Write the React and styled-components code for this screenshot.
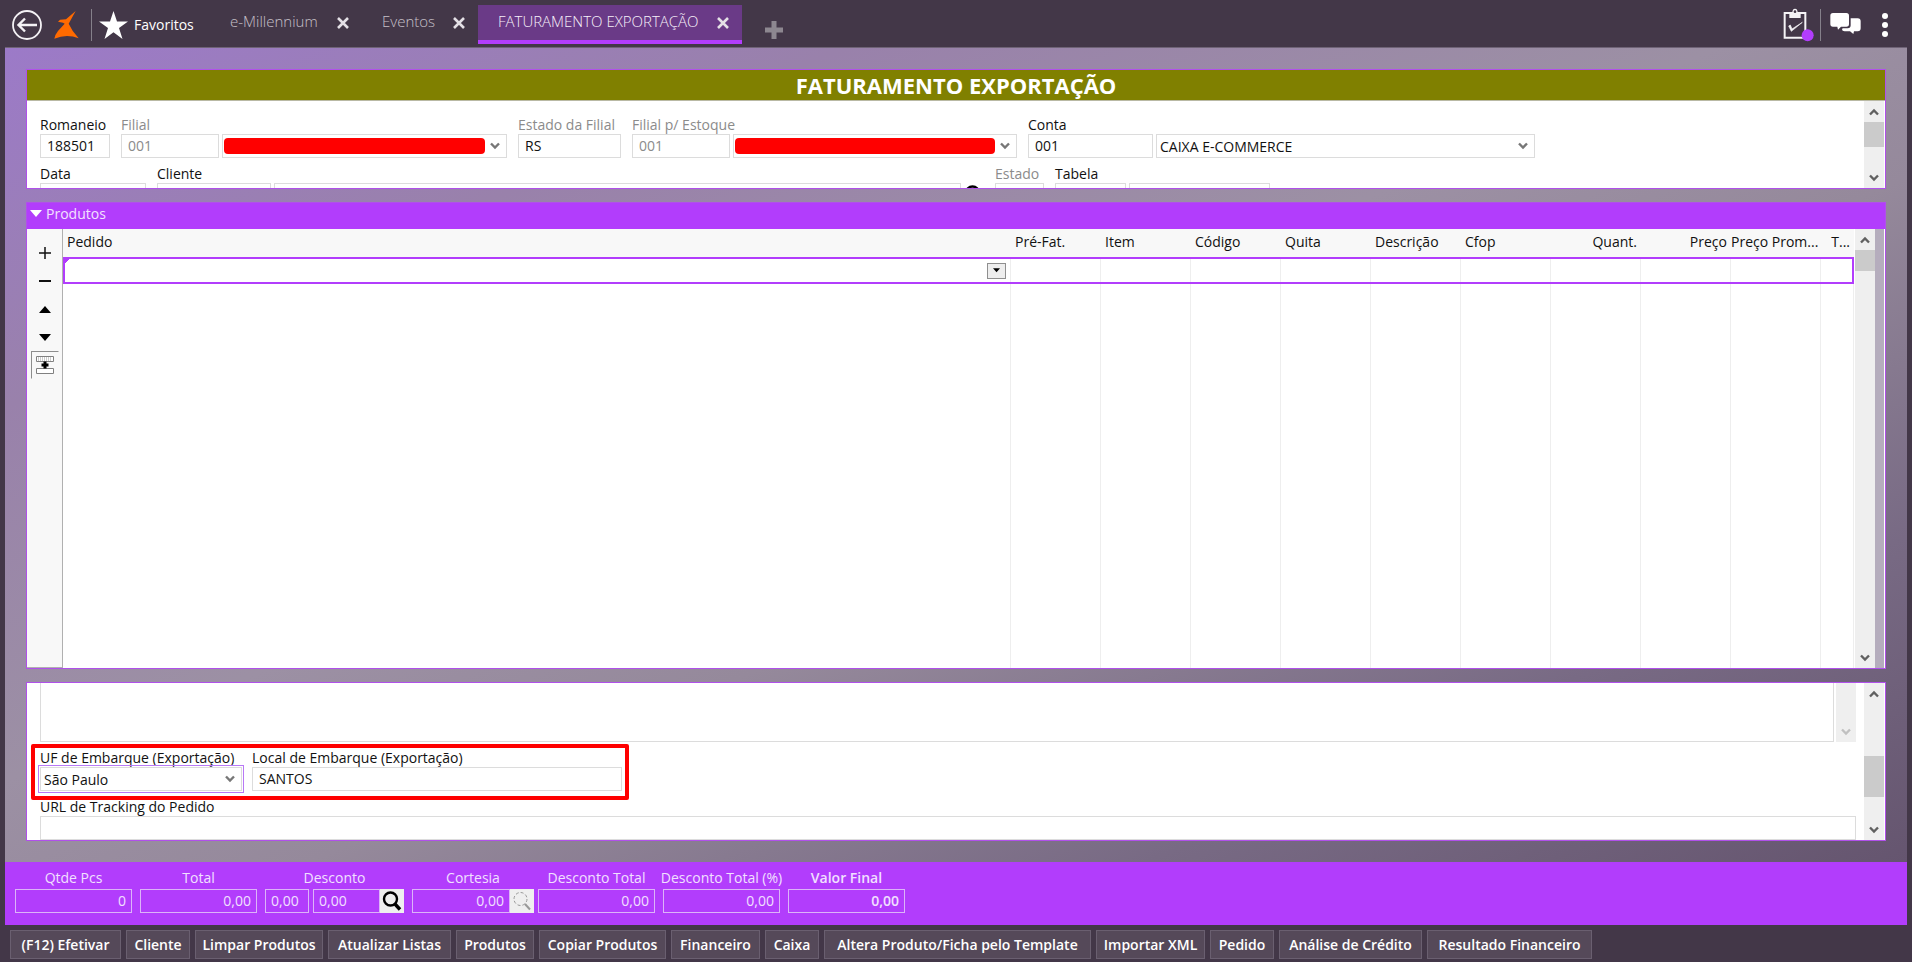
import React, { useId } from 'react'
import styled, { createGlobalStyle, css } from 'styled-components'

const GlobalStyle = createGlobalStyle`
    * {
        box-sizing: border-box;
    }

    body {
        margin: 0;
        font-family: "Open Sans", "Noto Sans", sans-serif;
        font-size: 14px;
        color: #111;
    }

    button, input, select, textarea {
        font: inherit;
        color: inherit;
        margin: 0;
        border-radius: 0;
    }

    button {
        padding: 0;
        border: none;
        background: transparent;
        cursor: pointer;
    }

    svg {
        display: block;
        flex: none;
    }
`

const Page = styled.div`
    display: flex;
    flex-direction: column;
    min-height: 100vh;
    background: #433748;
    overflow: hidden;
`

/* top bar */

const TopBar = styled.header`
    display: flex;
    height: 47px;
    padding: 0 18px 0 12px;
    color: #fff;
`

const TopGroup = styled.div`
    display: flex;
    align-items: center;
    gap: ${({ $gap }) => $gap}px;
    height: 49px;
`

const Divider = styled.span`
    width: 1px;
    height: 32px;
    background: #85808a;
`

const Favorites = styled.button`
    display: flex;
    align-items: center;
    gap: 6px;
    width: 118px;
    padding-left: 7px;
    font-weight: 500;
    white-space: nowrap;
`

const Tabs = styled.nav`
    display: flex;
    flex: 1;
    padding-top: 5px;
`

const Tab = styled.div`
    display: flex;
    align-items: center;
    justify-content: space-between;
    width: ${({ $width }) => $width}px;
    height: 39px;
    padding: 0 13px 0 20px;
    border-bottom: 4px solid transparent;
    color: #c6c0c9;
    font-size: 15px;
    font-weight: 300;
    white-space: nowrap;

    button:first-child {
        height: 30px;
        line-height: 26px;
        padding-bottom: 4px;
    }

    ${({ $active }) => $active && css`
        background: #6a3a87;
        border-bottom-color: #b23dfc;
        color: #f6f0f9;
    `}
`

const NewTab = styled.button`
    align-self: center;
    margin: 7px 0 0 23px;
`

const MenuButton = styled.button`
    padding: 0 5px 0 20px;
`

/* panels */

const Workspace = styled.main`
    display: flex;
    flex: 1;
    flex-direction: column;
    gap: 13px;
    margin: 0 5px;
    padding: 21px;
    border-top: 1px solid #6f6376;
    background: linear-gradient(to bottom right, #9c7ac8 0%, #9981ab 22%, #9c90a4 45%, #95899b 58%, #786a84 80%, #65556f 100%);
`

const Panel = styled.section`
    display: flex;
    flex-direction: column;
    flex: ${({ $height }) => ($height ? `0 0 ${$height}px` : '1 0 260px')};
    border: 1px solid #b050ea;
    background: #fff;
    overflow: hidden;
`

const Title = styled.h1`
    flex: none;
    margin: 0;
    height: 31px;
    border-bottom: 1px solid #b9b9a4;
    background: #808000;
    color: #fff;
    font-size: 22px;
    font-weight: 700;
    line-height: 30px;
    text-align: center;
`

const PanelBody = styled.div`
    display: flex;
    flex: 1;
    min-height: 0;
    padding-right: 1px;
`

const Form = styled.div`
    display: flex;
    flex: 1;
    flex-direction: column;
    gap: 7px;
    min-width: 0;
    padding: ${({ $top }) => $top}px 8px 0 13px;
    overflow: hidden;
`

const Row = styled.div`
    display: flex;
    flex: none;
    gap: 11px;
`

/* fields */

const FieldBox = styled.div`
    flex: ${({ $grow }) => ($grow ? '1 1 auto' : 'none')};

    label {
        display: block;
        height: 18px;
        line-height: 18px;
        white-space: nowrap;
        font-weight: ${({ $strong }) => ($strong ? 500 : 400)};
        color: ${({ $muted }) => ($muted ? '#8b8b8b' : '#111')};
    }
`

const Controls = styled.div`
    display: flex;
    gap: 3px;
`

const Input = styled.input`
    width: ${({ $width }) => ($width ? `${$width}px` : '100%')};
    height: 24px;
    padding: 0 6px 2px 6px;
    border: 1px solid #dcdcdc;
    background: #fff;
    color: ${({ $muted }) => ($muted ? '#8b8b8b' : '#111')};
    outline: none;
`

const SelectBox = styled.div`
    position: relative;
    width: ${({ $width }) => $width}px;
    height: 24px;
    border: 1px solid #dcdcdc;
    background: #fff;
    outline: ${({ $focused }) => ($focused ? '1px solid #b878f6' : 'none')};
    outline-offset: 1px;

    select {
        width: 100%;
        height: 22px;
        padding: 0 24px 0 3px;
        border: none;
        appearance: none;
        background: transparent;
        outline: none;
    }

    svg {
        position: absolute;
        top: 7px;
        right: 6px;
        pointer-events: none;
    }
`

const Redaction = styled.span`
    position: absolute;
    top: 3px;
    left: 1px;
    right: 21px;
    height: 16px;
    border-radius: 4px;
    background: #f00;
`

const LookupButton = styled.button`
    display: flex;
    align-items: center;
    justify-content: center;
    width: 24px;
    height: 24px;
    background: #efefef;
`

const Highlight = styled(Row)`
    position: relative;
    gap: 10px;
    align-self: flex-start;

    &::after {
        content: "";
        position: absolute;
        inset: -5px -7px -9px -9px;
        border: 4px solid #f00;
        border-radius: 2px;
        pointer-events: none;
    }
`

const NoteRow = styled.div`
    display: flex;
    flex: none;
    gap: 2px;
    height: 59px;

    textarea {
        flex: 1;
        border: 1px solid #dcdcdc;
        border-top: none;
        resize: none;
        outline: none;
    }
`

/* scroll bars */

const Track = styled.div`
    display: flex;
    flex: none;
    flex-direction: column;
    width: 20px;
    background: #efefef;

    button {
        display: flex;
        align-items: center;
        justify-content: center;
        flex: none;
        height: 21px;
    }

    button:last-child {
        margin-top: auto;
    }
`

const Thumb = styled.span`
    height: ${({ $size }) => $size}px;
    margin-top: ${({ $offset }) => $offset}px;
    background: #cbcbcb;
`

/* products */

const SectionBar = styled.button`
    display: flex;
    flex: none;
    align-items: center;
    gap: 4px;
    height: 26px;
    padding: 0 0 6px 3px;
    background: #b23dfc;
    color: #f3e2ff;
`

const ToolColumn = styled.div`
    display: flex;
    flex: none;
    flex-direction: column;
    align-items: center;
    width: 36px;
    padding-top: 10px;
    border-right: 1px solid #b0b0b0;
    border-bottom: 1px solid #b0b0b0;
    background: #f8f8f8;
`

const Tool = styled.button`
    display: flex;
    align-items: center;
    justify-content: center;
    width: 28px;
    height: 28px;
    border: 1px solid transparent;

    ${({ $pressed }) => $pressed && css`
        border-top-color: #8d8d8d;
        border-left-color: #8d8d8d;
    `}
`

const Grid = styled.div`
    flex: 1;
    min-width: 0;
    display: flex;
    padding-right: 1px;
    overflow: hidden;
`

const Table = styled.table`
    flex: 1;
    width: 100%;
    table-layout: fixed;
    border-collapse: separate;
    border-spacing: 0;

    td {
        padding: 0;
        border-right: 1px solid #eee;
    }
`

const HeadCell = styled.th`
    height: 28px;
    padding: 0 4px 4px ${({ $right }) => ($right ? 0 : 4)}px;
    background: #f8f8f8;
    font-weight: 400;
    text-align: ${({ $right }) => ($right ? 'right' : 'left')};
    white-space: nowrap;
`

const ActiveRow = styled.tr`
    height: 27px;
    outline: 2px solid #b23dfc;
    outline-offset: -2px;
`

const CellEditor = styled.div`
    display: flex;
    align-items: center;
    justify-content: flex-end;
    height: 27px;
    padding-right: 4px;
    background: linear-gradient(135deg, #b23dfc 6px, #fff 6px);

    button {
        display: flex;
        align-items: center;
        justify-content: center;
        width: 19px;
        height: 16px;
        border: 1px solid #8f8f8f;
        background: #eee;
    }
`

const Gutter = styled.span`
    width: 9px;
    background: #b5adbd;
`

/* totals and actions */

const Totals = styled.section`
    display: flex;
    gap: 8px;
    height: 63px;
    margin: 0 5px;
    padding: 7px 10px 0 10px;
    background: #b23dfc;
`

const TotalPair = styled.div`
    display: flex;
    gap: 4px;
`

const Total = styled.div`
    color: #f1e0ff;
    font-weight: ${({ $bold }) => ($bold ? 600 : 400)};

    label {
        display: flex;
        justify-content: center;
        width: 0;
        min-width: 100%;
        height: 20px;
        line-height: 18px;
        white-space: nowrap;
    }
`

const TotalInputs = styled.div`
    display: flex;
`

const TotalInput = styled.input`
    width: ${({ $width }) => $width}px;
    height: 24px;
    margin-right: ${({ $space }) => $space || 0}px;
    padding: 0 5px 2px 5px;
    border: 1px solid #dcb4f8;
    background: transparent;
    text-align: ${({ $left }) => ($left ? 'left' : 'right')};
    outline: none;
`

const Actions = styled.footer`
    display: flex;
    gap: 5px;
    height: 37px;
    padding: 5px 10px 3px 10px;
`

const Action = styled.button`
    flex: none;
    width: ${({ $width }) => $width}px;
    height: 29px;
    padding-bottom: 1px;
    border: 1px solid #6a5f70;
    background: #554959;
    color: #fff;
    font-weight: 600;
    white-space: nowrap;
`

/* icons */

const BackIcon = () => (
  <svg width="30" height="30" viewBox="0 0 30 30" fill="none" stroke="#f4f2f5">
    <circle cx="15" cy="15" r="14" strokeWidth="1.8" />
    <path d="M25 15H7M13 8.5 6.5 15l6.500 6.500" strokeWidth="2.400" />
  </svg>
)

const LogoIcon = () => (
  <svg width="25" height="28" viewBox="0 0 75 84" fill="#ff6a00">
    <path d="M65 0 44 38Q55 62 74 82Q38 68 1 83Q3 71 12 60L32 38 27 35 12 32 18 26 36 25Z" />
  </svg>
)

const StarIcon = () => (
  <svg width="29" height="28" viewBox="0 0 29 28" fill="#fff">
    <path d="M14.500 0 18 10.500h11l-9 6.500 3.500 11-9-6.800-9 6.800L9 17 0 10.500h11z" />
  </svg>
)

const CloseIcon = () => (
  <svg width="12" height="12" viewBox="0 0 12 12" stroke="#e4e0e6" strokeWidth="2.600">
    <path d="m1 1 10 10M11 1 1 11" />
  </svg>
)

const ClipboardIcon = () => (
  <svg width="31" height="34" viewBox="0 0 93 102">
    <path d="M5 15h62v74H5z" fill="none" stroke="#f5f3f6" strokeWidth="6" />
    <path d="M19 30V12h9q1-10 8-10t8 10h9v18z" fill="#f5f3f6" />
    <circle cx="36" cy="11" r="4" fill="#433748" />
    <path d="m17 54 8 16 33-27-31 20-5-12z" fill="#f5f3f6" stroke="#f5f3f6" strokeWidth="2" />
    <circle cx="74" cy="82" r="18" fill="#b23dfc" />
  </svg>
)

const ChatIcon = () => (
  <svg width="34" height="23" viewBox="-9 0 102 69" fill="#fff">
    <path d="M9 0h40q8 0 8 8v25q0 8-8 8H33l-9 9-2-9H9q-8 0-8-8V8q0-8 8-8z" />
    <path d="M62 16h21q9 0 9 9v21q0 9-9 9H72l-2 8-10-8H44q-8 0-8-6l2-3h15q9 0 9-9z" />
  </svg>
)

const DotsIcon = () => (
  <svg width="8" height="24" viewBox="0 0 8 24" fill="#fff">
    <circle cx="4" cy="3" r="3" />
    <circle cx="4" cy="12" r="3" />
    <circle cx="4" cy="21" r="3" />
  </svg>
)

const Chevron = ({ up, color = '#606060' }) => (
  <svg width="10" height="8" viewBox="0 0 10 8" fill="none" stroke={color} strokeWidth="2.400">
    <path d={up ? 'M1 6.500 5 2.500l4 4' : 'M1 1.500l4 4 4-4'} />
  </svg>
)

const Triangle = ({ up, size = 12, color = '#000' }) => (
  <svg width={size} height={size / 2 + 1} viewBox="0 0 12 7" fill={color}>
    <path d={up ? 'M0 7 6 0l6 7z' : 'M0 0h12L6 7z'} />
  </svg>
)

const SearchIcon = ({ muted }) => (
  <svg width="20" height="20" viewBox="0 0 20 20" fill="none" stroke={muted ? '#999' : '#000'}>
    <circle cx="8.500" cy="8" r="6.500" strokeWidth={muted ? 1 : 2.400} strokeDasharray={muted ? '3 2' : 'none'} />
    <path d="m13 13 5 5.500" strokeWidth={muted ? 2 : 3.400} />
  </svg>
)

const InsertRowIcon = () => (
  <svg width="18" height="18" viewBox="0 0 18 18">
    <path d="M.5.5h17v5H.5zM.5 12.500h17v5H.5z" fill="#fff" stroke="#808080" />
    <path d="M2 2h14M2 4h14" stroke="#999" strokeDasharray="1 1" />
    <path d="M9 5.500v7M5.500 9h7" stroke="#000" strokeWidth="3" />
  </svg>
)

const Field = ({ label, muted, strong, grow, children }) => {
  const id = useId()
  const [first, ...rest] = React.Children.toArray(children)

  return (
    <FieldBox $muted={muted} $strong={strong} $grow={grow}>
      <label htmlFor={id}>{label}</label>
      <Controls>
        {React.cloneElement(first, { id })}
        {rest}
      </Controls>
    </FieldBox>
  )
}

const Select = ({ id, width, value, focused, redacted, name }) => (
  <SelectBox $width={width} $focused={focused}>
    <select id={id} aria-label={id ? undefined : name}>
      <option>{value}</option>
    </select>
    {redacted && <Redaction />}
    <Chevron color="#777" />
  </SelectBox>
)

const Scrollbar = ({ offset = 0, size, disabled }) => (
  <Track>
    {!disabled && <button aria-label="Rolar para cima"><Chevron up /></button>}
    {size && <Thumb $offset={offset} $size={size} />}
    <button aria-label="Rolar para baixo"><Chevron color={disabled ? '#c0c0c0' : undefined} /></button>
  </Track>
)

const tabs = [
  { title: 'e-Millennium', width: 152 },
  { title: 'Eventos', width: 116 },
  { title: 'FATURAMENTO EXPORTAÇÃO', width: 264, active: true },
]

const columns = [
  { title: 'Pedido' },
  { title: 'Pré-Fat.', width: 90 },
  { title: 'Item', width: 90 },
  { title: 'Código', width: 90 },
  { title: 'Quita', width: 90 },
  { title: 'Descrição', width: 90 },
  { title: 'Cfop', width: 90 },
  { title: 'Quant.', width: 90, right: true },
  { title: 'Preço', width: 90, right: true },
  { title: 'Preço Prom...', width: 90, right: true },
  { title: 'T...', width: 33, right: true },
]

const actions = [
  ['(F12) Efetivar', 111],
  ['Cliente', 64],
  ['Limpar Produtos', 128],
  ['Atualizar Listas', 123],
  ['Produtos', 78],
  ['Copiar Produtos', 127],
  ['Financeiro', 89],
  ['Caixa', 54],
  ['Altera Produto/Ficha pelo Template', 267],
  ['Importar XML', 109],
  ['Pedido', 64],
  ['Análise de Crédito', 143],
  ['Resultado Financeiro', 165],
]

const Header = () => (
  <TopBar>
    <TopGroup $gap={12}>
      <button aria-label="Voltar"><BackIcon /></button>
      <LogoIcon />
      <Divider />
    </TopGroup>
    <TopGroup $gap={0}>
      <Favorites><StarIcon />Favoritos</Favorites>
    </TopGroup>
    <Tabs>
      {tabs.map(({ title, width, active }) => (
        <Tab key={title} $width={width} $active={active}>
          <button>{title}</button>
          <button aria-label={`Fechar ${title}`}><CloseIcon /></button>
        </Tab>
      ))}
      <NewTab aria-label="Nova aba">
        <svg width="18" height="18" viewBox="0 0 18 18" stroke="#8d8790" strokeWidth="5">
          <path d="M9 0v18M0 9h18" />
        </svg>
      </NewTab>
    </Tabs>
    <TopGroup $gap={6}>
      <button aria-label="Tarefas"><ClipboardIcon /></button>
      <Divider />
      <button aria-label="Mensagens"><ChatIcon /></button>
    </TopGroup>
    <TopGroup $gap={0}>
      <MenuButton aria-label="Menu"><DotsIcon /></MenuButton>
    </TopGroup>
  </TopBar>
)

const OrderPanel = () => (
  <Panel $height={120}>
    <Title>FATURAMENTO EXPORTAÇÃO</Title>
    <PanelBody>
      <Form $top={15}>
        <Row>
          <Field label="Romaneio" strong>
            <Input $width={70} defaultValue="188501" />
          </Field>
          <Field label="Filial" muted>
            <Input $width={98} $muted defaultValue="001" />
            <Select width={285} name="Nome da filial" redacted />
          </Field>
          <Field label="Estado da Filial" muted>
            <Input $width={103} defaultValue="RS" />
          </Field>
          <Field label="Filial p/ Estoque" muted>
            <Input $width={98} $muted defaultValue="001" />
            <Select width={284} name="Nome da filial de estoque" redacted />
          </Field>
          <Field label="Conta">
            <Input $width={125} defaultValue="001" />
            <Select width={379} name="Nome da conta" value="CAIXA E-COMMERCE" />
          </Field>
        </Row>
        <Row>
          <Field label="Data"><Input $width={106} /></Field>
          <Field label="Cliente">
            <Input $width={114} />
            <Input $width={687} aria-label="Nome do cliente" />
            <button aria-label="Buscar cliente"><SearchIcon /></button>
          </Field>
          <Field label="Estado" muted><Input $width={49} /></Field>
          <Field label="Tabela">
            <Input $width={71} />
            <Input $width={141} aria-label="Nome da tabela" />
          </Field>
        </Row>
      </Form>
      <Scrollbar size={25} />
    </PanelBody>
  </Panel>
)

const ProductsPanel = () => (
  <Panel>
    <SectionBar><Triangle color="#fff" />Produtos</SectionBar>
    <PanelBody>
      <ToolColumn>
        <Tool aria-label="Adicionar">
          <svg width="12" height="12" viewBox="0 0 12 12" stroke="#111" strokeWidth="1.500"><path d="M6 0v12M0 6h12" /></svg>
        </Tool>
        <Tool aria-label="Remover">
          <svg width="12" height="12" viewBox="0 0 12 12" stroke="#111" strokeWidth="2"><path d="M0 6h12" /></svg>
        </Tool>
        <Tool aria-label="Subir"><Triangle up /></Tool>
        <Tool aria-label="Descer"><Triangle /></Tool>
        <Tool aria-label="Inserir linha" $pressed><InsertRowIcon /></Tool>
      </ToolColumn>
      <Grid>
        <Table>
          <colgroup>
            {columns.map(({ title, width }) => <col key={title} width={width} />)}
          </colgroup>
          <thead>
            <tr>
              {columns.map(({ title, right }) => (
                <HeadCell key={title} $right={right}>{title}</HeadCell>
              ))}
            </tr>
          </thead>
          <tbody>
            <ActiveRow>
              {columns.map(({ title }, i) => (
                <td key={title}>
                  {i === 0 && (
                    <CellEditor>
                      <button aria-label="Escolher pedido"><Triangle size={7} /></button>
                    </CellEditor>
                  )}
                </td>
              ))}
            </ActiveRow>
            <tr>
              {columns.map(({ title }) => <td key={title} />)}
            </tr>
          </tbody>
        </Table>
      </Grid>
      <Scrollbar size={21} />
      <Gutter />
    </PanelBody>
  </Panel>
)

const ShippingPanel = () => (
  <Panel $height={159}>
    <PanelBody>
      <Form $top={0}>
        <NoteRow>
          <textarea aria-label="Observações" />
          <Scrollbar disabled />
        </NoteRow>
        <Highlight>
          <Field label="UF de Embarque (Exportação)">
            <Select width={202} value="São Paulo" focused />
          </Field>
          <Field label="Local de Embarque (Exportação)">
            <Input $width={370} defaultValue="SANTOS" />
          </Field>
        </Highlight>
        <Row>
          <Field label="URL de Tracking do Pedido" grow><Input /></Field>
        </Row>
      </Form>
      <Scrollbar offset={52} size={41} />
    </PanelBody>
  </Panel>
)

const TotalField = ({ id, label, value = '0,00', bold, width = 117, lookup, muted }) => (
  <Total $bold={bold}>
    <label htmlFor={id}>{label}</label>
    <TotalInputs>
      <TotalInput id={id} $width={width} defaultValue={value} />
      {lookup && <LookupButton aria-label={`Buscar ${label}`}><SearchIcon muted={muted} /></LookupButton>}
    </TotalInputs>
  </Total>
)

const App = () => {
  return (
    <Page>
      <GlobalStyle />
      <Header />
      <Workspace>
        <OrderPanel />
        <ProductsPanel />
        <ShippingPanel />
      </Workspace>
      <Totals>
        <TotalField id="qtde" label="Qtde Pcs" value="0" />
        <TotalField id="total" label="Total" />
        <Total>
          <label htmlFor="desconto">Desconto</label>
          <TotalInputs>
            <TotalInput aria-label="Desconto (%)" $width={44} $space={4} $left defaultValue="0,00" />
            <TotalInput id="desconto" $width={67} $left defaultValue="0,00" />
            <LookupButton aria-label="Buscar desconto"><SearchIcon /></LookupButton>
          </TotalInputs>
        </Total>
        <TotalPair>
          <TotalField id="cortesia" label="Cortesia" width={98} lookup muted />
          <TotalField id="desconto-total" label="Desconto Total" />
        </TotalPair>
        <TotalField id="desconto-pct" label="Desconto Total (%)" />
        <TotalField id="valor-final" label="Valor Final" bold />
      </Totals>
      <Actions>
        {actions.map(([label, width]) => (
          <Action key={label} $width={width}>{label}</Action>
        ))}
      </Actions>
    </Page>
  )
}

export default App
